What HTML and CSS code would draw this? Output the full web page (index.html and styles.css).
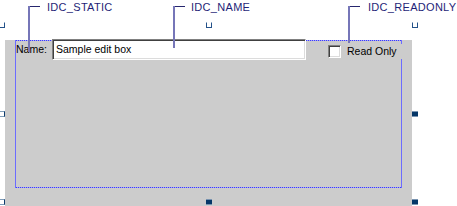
FILE: index.html
```html
<!DOCTYPE html>
<html lang="en">
<head>
  <meta charset="UTF-8">
  <title>Dialog Editor</title>
  <link rel="stylesheet" href="styles.css">
</head>
<body>

  <div class="stage">
    <!-- control id callouts -->
    <div class="callout callout-static"><span class="callout-text">IDC_STATIC</span></div>
    <div class="callout callout-name"><span class="callout-text">IDC_NAME</span></div>
    <div class="callout callout-readonly"><span class="callout-text">IDC_READONLY</span></div>

    <div class="dialog">
      <div class="frame">
        <div class="row">
          <div class="label">Name:</div>
          <div class="edit">Sample edit box</div>
          <div class="check">
            <span class="check-box"></span>
            <span class="check-text">Read Only</span>
          </div>
        </div>
      </div>
    </div>

    <!-- sizing handles -->
    <div class="handle hollow-top h-tl"></div>
    <div class="handle hollow-top h-tm"></div>
    <div class="handle hollow-top h-tr"></div>
    <div class="handle hollow-left h-ml"></div>
    <div class="handle hollow-left h-bl"></div>
    <div class="handle filled h-mr"></div>
    <div class="handle filled h-bm"></div>
    <div class="handle filled h-br"></div>
  </div>

</body>
</html>
```

FILE: styles.css
```css
body {
  margin: 0;
  background: #fff;
  font-family: 'Liberation Sans', Arial, sans-serif;
  font-size: 10.5px;
  color: #000;
}

.stage {
  position: relative;
  width: 457px;
  height: 206px;
  padding-top: 28px;
  box-sizing: border-box;
  overflow: hidden;
}

/* callouts */
.callout {
  position: absolute;
  top: 0;
  z-index: 2;
}

.callout::before {
  content: '';
  position: absolute;
  left: 0;
  top: 6px;
  width: 12px;
  height: 1px;
  background: #26266e;
}

.callout::after {
  content: '';
  position: absolute;
  left: 0;
  top: 6px;
  width: 2px;
  background: #7676b8;
}

.callout-text {
  display: block;
  padding-top: 1px;
  font-size: 11px;
  letter-spacing: 0.3px;
  line-height: 13px;
  color: #1f1f78;
  white-space: nowrap;
}

.callout-static { left: 28px; }
.callout-static .callout-text { padding-left: 19px; }
.callout-static::after { height: 46px; }

.callout-name { left: 173px; }
.callout-name .callout-text { padding-left: 18px; }
.callout-name::after { height: 42px; }

.callout-readonly { left: 348px; }
.callout-readonly .callout-text { padding-left: 20px; }
.callout-readonly::after { height: 37px; }

/* dialog surface */
.dialog {
  margin-left: 5px;
  width: 407px;
  height: 170px;
  background: #cccccc;
  border-bottom: 1px solid #e2e2e2;
}

/* dotted blue selection frame: dotted top/bottom, solid sides */
.frame {
  margin: 12px 0 0 10px;
  width: 387px;
  height: 148px;
  box-sizing: border-box;
  padding: 1px 0;
  border-left: 1px solid #6c6cff;
  border-right: 1px solid #6c6cff;
  background:
    repeating-linear-gradient(90deg, #3c3cff 0 1px, #a8a8f0 1px 2px) top left / 100% 1px no-repeat,
    repeating-linear-gradient(90deg, #3c3cff 0 1px, #a8a8f0 1px 2px) bottom left / 100% 1px no-repeat;
}

.row {
  display: flex;
  align-items: flex-start;
  margin-top: -2px;
}

.label {
  flex-shrink: 0;
  width: 36px;
  margin-top: 4px;
  line-height: 13px;
}

.edit {
  flex-shrink: 0;
  width: 254px;
  height: 21px;
  box-sizing: border-box;
  padding: 3px 3px;
  line-height: 13px;
  background: #fff;
  border: 1px solid;
  border-color: #808080 #fff #fff #808080;
  box-shadow: inset 1px 1px #404040, inset -1px -1px #dcdcdc;
  position: relative;
  z-index: 1;
}

.check {
  flex-shrink: 0;
  display: flex;
  align-items: flex-start;
  gap: 6px;
  width: 74px;
  height: 15px;
  margin-left: 22px;
  margin-top: 5px;
  padding-top: 1px;
  box-sizing: border-box;
  background: #cccccc;
  position: relative;
}

.check-box {
  width: 13px;
  height: 13px;
  box-sizing: border-box;
  background: #fff;
  border: 1px solid;
  border-color: #808080 #fff #fff #808080;
  box-shadow: inset 1px 1px #404040, inset -1px -1px #dcdcdc;
}

.check-text {
  line-height: 13px;
  white-space: nowrap;
}

/* handles */
.handle {
  position: absolute;
  width: 6px;
  height: 6px;
  box-sizing: border-box;
}

.hollow-top {
  background: #fff;
  border: 1px solid #24528a;
  border-top-color: #fff;
}

.hollow-left {
  background: #fff;
  border: 1px solid #7f9db9;
  border-right-color: #0d3a6c;
}

.filled {
  background: #053768;
  border-top: 1px solid #7893b0;
  border-bottom: 1px solid #7893b0;
}

.h-tl { left: -1px; top: 22px; }
.h-tm { left: 206px; top: 22px; }
.h-tr { left: 412px; top: 22px; }
.h-ml { left: -1px; top: 111px; }
.h-bl { left: -1px; top: 199px; }
.h-mr { left: 412px; top: 111px; }
.h-bm { left: 206px; top: 199px; }
.h-br { left: 412px; top: 199px; }
```
